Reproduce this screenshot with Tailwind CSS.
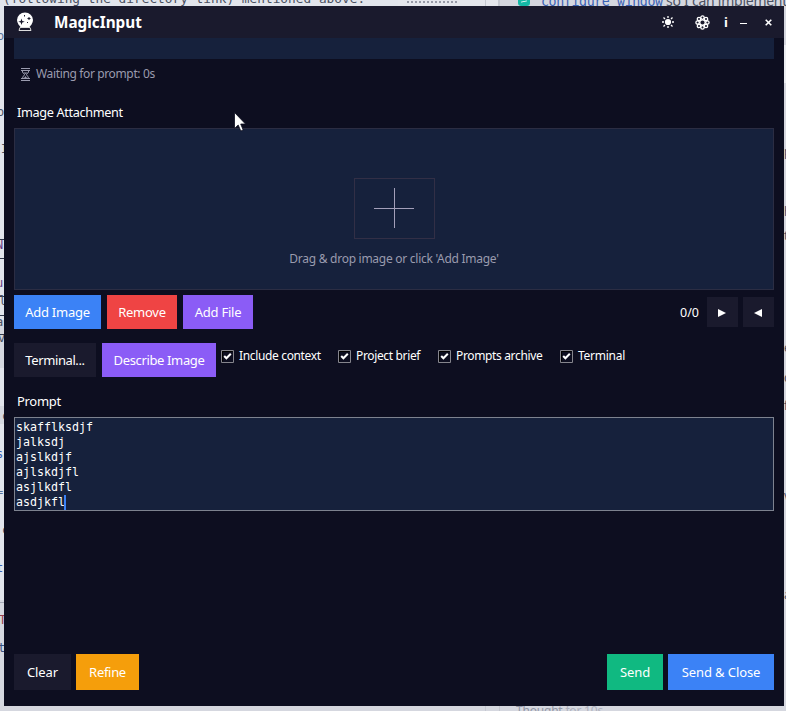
<!DOCTYPE html>
<html lang="en">
<head>
<meta charset="utf-8">
<title>MagicInput</title>
<script src="https://cdn.jsdelivr.net/npm/@tailwindcss/browser@4"></script>
</head>
<body class="relative w-[786px] h-[711px] overflow-hidden bg-[#d5d7df] font-['Noto_Sans',sans-serif] text-[13px] text-white">
<!-- desktop content behind the window -->
<div class="absolute inset-0 overflow-hidden whitespace-pre text-[#4b5162]" aria-hidden="true">
  <div class="absolute left-0 top-0 w-[398px] h-[706px] bg-[#e2e5ec]"></div>
  <div class="absolute left-0 top-[320px] w-[4px] h-[48px] bg-[#d5d8e0]"></div>
  <div class="absolute left-0 top-[406px] w-[4px] h-[18px] bg-[#d5d8e0]"></div>
  <div class="absolute left-0 top-[600px] w-[4px] h-[106px] bg-[#d5d8e0]"></div>
  <div class="absolute left-[398px] top-0 w-[101px] h-[6px] bg-[#e4e6ec] border-r border-[#c5c8d0]"></div>
  <div class="absolute left-[407px] top-[1px] w-[50px] h-0 border-t-2 border-dotted border-[#9699a6]"></div>
  <div class="absolute left-[485px] top-0 w-px h-[711px] bg-[#c5c8d0]"></div>
  <div class="absolute left-[499px] top-0 w-px h-[711px] bg-[#c5c8d0]"></div>
  <div class="absolute left-[784px] top-[45px] w-[2px] h-[38px] bg-[#eceef2]"></div>
  <div class="absolute left-[3px] top-[-9px] leading-[16px] text-[12.800px] font-['DejaVu_Sans_Mono',monospace]">(following the directory link) mentioned above.</div>
  <div class="absolute left-[518px] top-[-6px] w-[12px] h-[12px] rounded-[3px] bg-[#14b8a6]"></div>
  <div class="absolute left-[521px] top-[1px] w-[6px] h-px bg-white -rotate-12"></div>
  <div class="absolute left-[541px] top-[-6px] leading-[16px] text-[13.3px] text-[#3b63b5] font-['DejaVu_Sans_Mono',monospace] tracking-[-0.4px]">configure_window</div>
  <div class="absolute left-[666px] top-[-8px] leading-[18px] text-[14px] tracking-[-0.25px]">so I can implement</div>
  <div class="absolute left-[516px] top-[703px] leading-[16px] text-[12px] text-[#9296a5] tracking-[-0.2px]">Thought <span class="text-[#adb0bc]">for 10s</span></div>
  <div class="absolute left-[-3px] top-[28px] leading-[16px] text-[12px] text-[#58729b] font-['DejaVu_Sans_Mono',monospace]">o</div>
  <div class="absolute left-[-3px] top-[104px] leading-[16px] text-[12px] font-['DejaVu_Sans_Mono',monospace]">o</div>
  <div class="absolute left-[1px] top-[141px] leading-[16px] text-[12px] font-['DejaVu_Sans_Mono',monospace]">I</div>
  <div class="absolute left-[-4px] top-[237px] leading-[16px] text-[12px] text-[#673b83] font-['DejaVu_Sans_Mono',monospace]">N</div>
  <div class="absolute left-0 top-[239px] w-[4px] h-px bg-[#30384b]"></div>
  <div class="absolute left-0 top-[258px] w-[4px] h-px bg-[#30384b]"></div>
  <div class="absolute left-[-4px] top-[275px] leading-[16px] text-[12px] text-[#673b83] font-['DejaVu_Sans_Mono',monospace]">u</div>
  <div class="absolute left-0 top-[296px] w-[4px] h-px bg-[#30384b]"></div>
  <div class="absolute left-[-1px] top-[293px] leading-[16px] text-[12px] font-['DejaVu_Sans_Mono',monospace]">l</div>
  <div class="absolute left-0 top-[315px] w-[4px] h-px bg-[#30384b]"></div>
  <div class="absolute left-[-4px] top-[314px] leading-[16px] text-[12px] font-['DejaVu_Sans_Mono',monospace]">a</div>
  <div class="absolute left-0 top-[334px] w-[4px] h-px bg-[#30384b]"></div>
  <div class="absolute left-[-2px] top-[330px] leading-[16px] text-[12px] font-['DejaVu_Sans_Mono',monospace]">v</div>
  <div class="absolute left-[2px] top-[408px] leading-[16px] text-[12px] font-['DejaVu_Sans_Mono',monospace]">c</div>
  <div class="absolute left-[-4px] top-[446px] leading-[16px] text-[12px] text-[#3b63b5] font-['DejaVu_Sans_Mono',monospace]">s</div>
  <div class="absolute left-[-4px] top-[484px] leading-[16px] text-[12px] text-[#58729b] font-['DejaVu_Sans_Mono',monospace]">=</div>
  <div class="absolute left-[2px] top-[522px] leading-[16px] text-[12px] font-['DejaVu_Sans_Mono',monospace]">c</div>
  <div class="absolute left-[-4px] top-[560px] leading-[16px] text-[12px] text-[#3b63b5] font-['DejaVu_Sans_Mono',monospace]">t</div>
  <div class="absolute left-0 top-[602px] w-[4px] h-px bg-[#a5a9b6]"></div>
  <div class="absolute left-[-1px] top-[612px] leading-[16px] text-[12px] text-[#98404f] font-['DejaVu_Sans_Mono',monospace]">T</div>
  <div class="absolute left-[-2px] top-[640px] leading-[16px] text-[12px] text-[#385180] font-['DejaVu_Sans_Mono',monospace]">t</div>
  <div class="absolute left-[784px] top-[144px] leading-[16px] text-[12px]">p</div>
  <div class="absolute left-[784px] top-[204px] leading-[16px] text-[12px]">h</div>
  <div class="absolute left-[784px] top-[228px] leading-[16px] text-[12px]">t</div>
  <div class="absolute left-[784px] top-[340px] leading-[16px] text-[12px]">e</div>
  <div class="absolute left-[784px] top-[370px] leading-[16px] text-[12px]">c</div>
  <div class="absolute left-[784px] top-[398px] leading-[16px] text-[12px]">f</div>
  <div class="absolute left-[784px] top-[488px] leading-[16px] text-[12px]">v</div>
  <div class="absolute left-[784px] top-[587px] leading-[16px] text-[12px]">a</div>
</div>

<!-- application window -->
<main class="relative ml-[4px] mt-[6px] w-[780px] h-[700px] bg-[#0d0e20] flex flex-col whitespace-nowrap">
  <header class="h-[32px] shrink-0 bg-[#1a1a2d] flex items-center pl-[12px]">
    <svg class="w-[18px] h-[20px] shrink-0" viewBox="0 0 18 20">
      <path d="M4.500 15 L2.500 12.500 Q1 10.500 1 8 A8 7.500 0 0 1 17 8 Q17 10.500 15.500 12.500 L13.500 15 Z" fill="#fff"/>
      <path d="M5.500 6.500 L6.300 9 L8.800 9.800 L6.300 10.600 L5.500 13 L4.700 10.600 L2.200 9.800 L4.700 9 Z" fill="#1a1a2d"/>
      <path d="M12.500 5h1v1h1v1h-1v1h-1v-1h-1v-1h1ZM8 3h1v1.500h-1ZM11 10h1v1h-1Z" fill="#1a1a2d"/>
      <path d="M4 15.500 H14 L15 18.500 H3 Z" fill="#1a1a2d" stroke="#ddd" stroke-width="1"/>
    </svg>
    <h1 class="ml-[20px] w-[100px] text-[15.3px] leading-[20px] font-bold">MagicInput</h1>
    <svg class="ml-[508px] w-[12px] h-[12px] shrink-0" viewBox="0 0 12 12" stroke="#fff" stroke-width="1.300">
      <circle cx="6" cy="6" r="3.100" fill="#fff" stroke="none"/>
      <path d="M6 0V2M6 10V12M0 6H2M10 6H12M1.500 1.500L3 3M9 9L10.500 10.500M10.500 1.500L9 3M3 9L1.500 10.500"/>
    </svg>
    <svg class="ml-[21px] w-[15px] h-[15px] shrink-0" viewBox="0 0 15 15" fill="none" stroke="#fff" stroke-width="1.300">
      <circle cx="7.500" cy="2.600" r="1.700"/><circle cx="11" cy="4" r="1.700"/><circle cx="12.400" cy="7.500" r="1.700"/><circle cx="11" cy="11" r="1.700"/>
      <circle cx="7.500" cy="12.400" r="1.700"/><circle cx="4" cy="11" r="1.700"/><circle cx="2.600" cy="7.500" r="1.700"/><circle cx="4" cy="4" r="1.700"/>
      <circle cx="7.500" cy="7.500" r="2.700" stroke-width="1.200"/>
    </svg>
    <span class="ml-[14px] w-[5px] text-[13px] leading-[16px] font-bold">i</span>
    <svg class="ml-[11px] w-[7px] h-[9px] shrink-0" viewBox="0 0 7 9"><path d="M0 5.500H7" stroke="#fff"/></svg>
    <svg class="ml-[18px] w-[7px] h-[7px] shrink-0" viewBox="0 0 7 7"><path d="M.7 .7L6.300 6.300M6.300 .7L.7 6.300" stroke="#fff" stroke-width="1.600"/></svg>
  </header>

  <div class="px-[10px] flex flex-col flex-1">
    <div class="h-[21px] bg-[#16213c]"></div>
    <div class="mt-[6px] h-[18px] pl-[7px] flex items-center text-[12px] text-[#9a9bae]">
      <svg class="w-[9px] h-[13px]" viewBox="0 0 9 13" fill="none" stroke="#9a9bae">
        <path d="M0 .5H9M0 2.500H9M0 10.500H9M0 12.500H9M1.500 2.500V4Q1.500 5 4 6.500Q1.500 8 1.500 10.500M7.500 2.500V4Q7.500 5 5 6.500Q7.500 8 7.500 10.500"/>
        <path d="M2.500 4.500H6.500L4.500 6ZM3 10L4.500 8L6 10Z" fill="#9a9bae" stroke="none"/>
      </svg>
      <span class="ml-[6px] tracking-[-0.36px]">Waiting for prompt: 0s</span>
    </div>
    <h2 class="mt-[19px] h-[20px] leading-[20px] pl-[3px] text-[12.700px] tracking-[-0.35px]">Image Attachment</h2>
    <section class="mt-[6px] h-[162px] bg-[#16213c] border border-[#2b2d43] flex flex-col items-center">
      <div class="mt-[49px] w-[81px] h-[61px] border border-[#322f46] flex items-center justify-center">
        <svg class="w-[41px] h-[41px]" viewBox="0 0 41 41"><path d="M20.500 0V40M0 20.500H40" stroke="#a39fb9"/></svg>
      </div>
      <p class="mt-[11px] h-[18px] leading-[18px] text-[12px] tracking-[-0.27px] text-[#9a9bae]">Drag &amp; drop image or click 'Add Image'</p>
    </section>

    <div class="mt-[5px] h-[34px] flex items-center">
      <button class="w-[87px] h-[34px] pt-[2px] tracking-[-0.25px] bg-[#3b82f6]">Add Image</button>
      <button class="ml-[6px] w-[70px] h-[34px] pt-[2px] tracking-[-0.25px] bg-[#ef4444]">Remove</button>
      <button class="ml-[6px] w-[70px] h-[34px] pt-[2px] tracking-[-0.25px] bg-[#8b5cf6]">Add File</button>
      <span class="ml-auto mr-[8px] pt-[2px] text-[12.500px]">0/0</span>
      <button class="w-[31px] h-[30px] pr-px pt-px bg-[#1a1a2d] flex items-center justify-center"><svg class="w-[8px] h-[8px]" viewBox="0 0 8 8"><path d="M0 0L8 4L0 8Z" fill="#fff"/></svg></button>
      <button class="ml-[5px] w-[31px] h-[30px] pr-px pt-px bg-[#1a1a2d] flex items-center justify-center"><svg class="w-[8px] h-[8px]" viewBox="0 0 8 8"><path d="M8 0L0 4L8 8Z" fill="#fff"/></svg></button>
    </div>

    <div class="mt-[14px] h-[34px] flex">
      <button class="w-[82px] h-[34px] pt-[2px] tracking-[-0.4px] bg-[#1a1a2d]">Terminal...</button>
      <button class="ml-[6px] w-[114px] h-[34px] pt-[2px] tracking-[-0.36px] bg-[#8b5cf6]">Describe Image</button>
      <div class="ml-[5px] mt-[4px] h-[18px] flex items-center text-[12px] tracking-[-0.35px]">
        <label class="w-[117px] flex items-center gap-[5px]"><svg class="w-[13px] h-[13px]" viewBox="0 0 13 13" fill="none"><path d="M.5 .5H12.500V12.500H.5Z" stroke="#85858d"/><path d="M1.500 11.500V1.500H11.500" stroke="#000"/><path d="M3.200 6L5.400 8.300L9.800 3.700" stroke="#fff" stroke-width="2"/></svg>Include context</label>
        <label class="w-[100px] flex items-center gap-[5px]"><svg class="w-[13px] h-[13px]" viewBox="0 0 13 13" fill="none"><path d="M.5 .5H12.500V12.500H.5Z" stroke="#85858d"/><path d="M1.500 11.500V1.500H11.500" stroke="#000"/><path d="M3.200 6L5.400 8.300L9.800 3.700" stroke="#fff" stroke-width="2"/></svg>Project brief</label>
        <label class="w-[122px] flex items-center gap-[5px]"><svg class="w-[13px] h-[13px]" viewBox="0 0 13 13" fill="none"><path d="M.5 .5H12.500V12.500H.5Z" stroke="#85858d"/><path d="M1.500 11.500V1.500H11.500" stroke="#000"/><path d="M3.200 6L5.400 8.300L9.800 3.700" stroke="#fff" stroke-width="2"/></svg>Prompts archive</label>
        <label class="flex items-center gap-[5px] tracking-[-0.25px]"><svg class="w-[13px] h-[13px]" viewBox="0 0 13 13" fill="none"><path d="M.5 .5H12.500V12.500H.5Z" stroke="#85858d"/><path d="M1.500 11.500V1.500H11.500" stroke="#000"/><path d="M3.200 6L5.400 8.300L9.800 3.700" stroke="#fff" stroke-width="2"/></svg>Terminal</label>
      </div>
    </div>

    <h2 class="mt-[14px] h-[20px] leading-[20px] pl-[3px] tracking-[-0.3px]">Prompt</h2>
    <div class="mt-[6px] h-[94px] bg-[#16213c] border border-[#7d828f] pl-px pt-[2px] font-['DejaVu_Sans_Mono',monospace] text-[11.630px] leading-[15px]">
      <div>skafflksdjf</div>
      <div>jalksdj</div>
      <div>ajslkdjf</div>
      <div>ajlskdjfl</div>
      <div>asjlkdfl</div>
      <div class="flex">asdjkfl<span class="-ml-px w-[2px] h-[15px] bg-[#3b82f6]"></span></div>
    </div>

    <footer class="mt-auto mb-[16px] h-[36px] flex tracking-[-0.1px]">
      <button class="w-[57px] pt-[2px] bg-[#1a1a2d]">Clear</button>
      <button class="ml-[5px] w-[63px] pt-[2px] tracking-[-0.3px] bg-[#f59e0b]">Refine</button>
      <button class="ml-auto w-[56px] pt-[2px] bg-[#10b981]">Send</button>
      <button class="ml-[5px] w-[106px] pt-[2px] bg-[#3b82f6]">Send &amp; Close</button>
    </footer>
  </div>
</main>

<svg class="absolute left-[234px] top-[112px] w-[12px] h-[20px]" viewBox="0 0 12 20"><path d="M.5 .5V16.500L4.200 13L6.800 19L9.200 18L6.700 12H11.500Z" fill="#fff" stroke="#0d0e20" stroke-width=".8"/></svg>
</body>
</html>
